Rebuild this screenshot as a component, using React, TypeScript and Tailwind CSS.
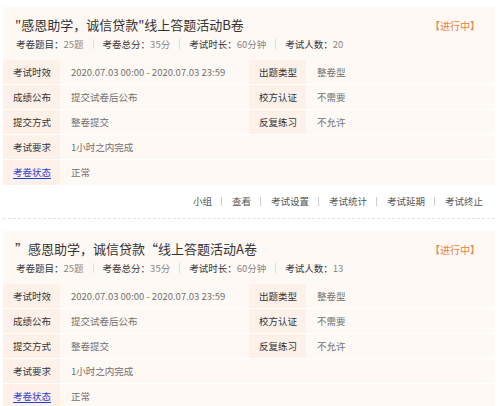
import React from 'react';

interface Exam {
  title: string;
  people: number;
}

const EXAMS: Exam[] = [
  { title: '"感恩助学，诚信贷款"线上答题活动B卷', people: 20 },
  { title: '”感恩助学，诚信贷款“线上答题活动A卷', people: 13 },
];

const ACTIONS = ['小组', '查看', '考试设置', '考试统计', '考试延期', '考试终止'];

function Label({ children, link }: { children: React.ReactNode; link?: boolean }) {
  return (
    <div className="w-[57px] shrink-0 bg-[#fdf1e9] pl-[10px] flex items-center">
      {link ? (
        <span className="text-[#2a3fd4] underline underline-offset-2">{children}</span>
      ) : (
        <span className="text-[#333]">{children}</span>
      )}
    </div>
  );
}

function Value({ children }: { children: React.ReactNode }) {
  return <div className="flex-1 pl-[11px] flex items-center text-[#707070]">{children}</div>;
}

function Meta({ label, value }: { label: string; value: string }) {
  return (
    <span>
      <span className="text-[#333]">{label}：</span>
      <span className="text-[#888]">{value}</span>
    </span>
  );
}

function Sep() {
  return <span className="mx-[9px] w-px h-[10px] bg-[#e0e0e0] inline-block" />;
}

function ExamCard({ exam }: { exam: Exam }) {
  return (
    <div>
      <div className="bg-[#fff9f5]">
        <div className="flex items-center justify-between pt-[9px] pl-[12px] pr-[15px]">
          <h2 className="text-[13px] leading-[18px] text-[#333]">{exam.title}</h2>
          <span className="text-[10px] text-[#e8803c]">【进行中】</span>
        </div>
        <div className="flex items-center text-[9.5px] leading-[14px] mt-[3px] mb-[9px] pl-[13px]">
          <Meta label="考卷题目" value="25题" />
          <Sep />
          <Meta label="考卷总分" value="35分" />
          <Sep />
          <Meta label="考试时长" value="60分钟" />
          <Sep />
          <Meta label="考试人数" value={String(exam.people)} />
        </div>
        <div className="text-[9.5px]">
          <div className="flex h-[25px] border-b border-white">
            <div className="flex w-1/2">
              <Label>考试时效</Label>
              <Value>2020.07.03 00:00 - 2020.07.03 23:59</Value>
            </div>
            <div className="flex w-1/2">
              <Label>出题类型</Label>
              <Value>整卷型</Value>
            </div>
          </div>
          <div className="flex h-[25px] border-b border-white">
            <div className="flex w-1/2">
              <Label>成绩公布</Label>
              <Value>提交试卷后公布</Value>
            </div>
            <div className="flex w-1/2">
              <Label>校方认证</Label>
              <Value>不需要</Value>
            </div>
          </div>
          <div className="flex h-[25px] border-b border-white">
            <div className="flex w-1/2">
              <Label>提交方式</Label>
              <Value>整卷提交</Value>
            </div>
            <div className="flex w-1/2">
              <Label>反复练习</Label>
              <Value>不允许</Value>
            </div>
          </div>
          <div className="flex h-[25px] border-b border-white">
            <Label>考试要求</Label>
            <Value>1小时之内完成</Value>
          </div>
          <div className="flex h-[25px]">
            <Label link>考卷状态</Label>
            <Value>正常</Value>
          </div>
        </div>
      </div>
      <div className="flex justify-end items-center pt-[9px] pb-[10px] pr-[12px] text-[9.5px] leading-[14px] text-[#555] border-b border-dashed border-[#e3e3e3]">
        {ACTIONS.map((a, i) => (
          <span key={a} className="flex items-center">
            {i > 0 && <span className="mx-[9.5px] w-px h-[9px] bg-[#ccc] inline-block" />}
            {a}
          </span>
        ))}
      </div>
    </div>
  );
}

export default function App() {
  return (
    <div
      className="w-[500px] bg-white pt-[7px] pl-[3px] pr-[5px] flex flex-col gap-[12px]"
      style={{ fontFamily: '"Noto Sans CJK SC", "Noto Sans", sans-serif' }}
    >
      {EXAMS.map(e => (
        <ExamCard key={e.people} exam={e} />
      ))}
    </div>
  );
}
